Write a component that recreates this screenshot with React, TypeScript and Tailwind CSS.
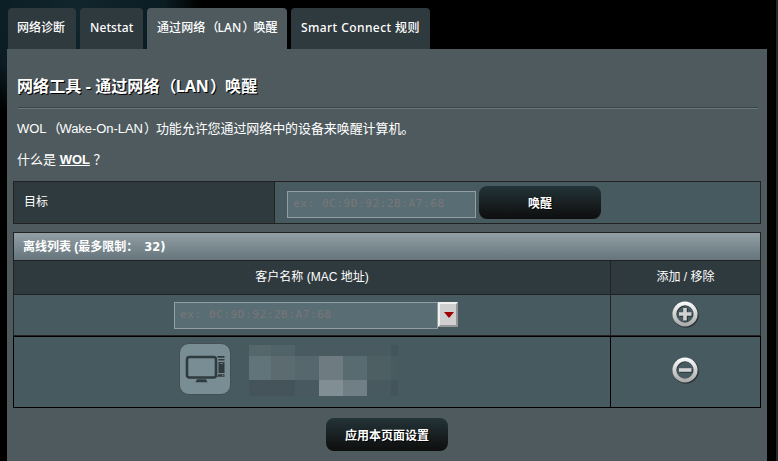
import React from "react";

const sans = "font-['Liberation_Sans','Noto_Sans_CJK_SC',sans-serif]";
const ui = "font-['Noto_Sans','Noto_Sans_CJK_SC',sans-serif]";

function Tab({ children, className }: { children: React.ReactNode; className: string }) {
  return (
    <div
      className={`h-[41px] shrink-0 rounded-t-[4px] pt-[11px] text-[12px] leading-[18px] font-medium whitespace-nowrap text-white ${ui} ${className}`}
    >
      {children}
    </div>
  );
}

// Full-width parentheses, set a little closer to the Latin text they enclose.
function Paren({ children }: { children: React.ReactNode }) {
  return (
    <>
      <span className="mr-[-1px] ml-[1px]">（</span>
      {children}
      <span className="mr-[-1px] ml-[1px]">）</span>
    </>
  );
}

function MacField({ className }: { className: string }) {
  return (
    <input
      placeholder="ex: 0C:9D:92:2B:A7:68"
      className={`h-[27px] shrink-0 border border-[#929ea1] bg-[#596d74] pb-[2px] pl-[5px] font-['DejaVu_Sans_Mono',monospace] text-[11px] tracking-[0.6px] text-white outline-none placeholder:text-[#7a7677] placeholder:opacity-100 ${className}`}
    />
  );
}

function Button({ children }: { children: React.ReactNode }) {
  return (
    <button
      className={`h-[33px] w-[122px] shrink-0 rounded-[8px] bg-linear-to-b from-[#233438] to-[#0e0e0e] pt-[2px] text-center text-[12px] leading-[18px] font-bold text-white [text-shadow:1px_1px_0_black] ${sans}`}
    >
      {children}
    </button>
  );
}

function RoundIcon({ minus = false }: { minus?: boolean }) {
  const id = minus ? "metal-minus" : "metal-plus";
  return (
    <svg width="30" height="30" viewBox="0 0 30 30" fill="none">
      <defs>
        <linearGradient id={id} x1="0" y1="2" x2="0" y2="27" gradientUnits="userSpaceOnUse">
          <stop stopColor="#ffffff" />
          <stop offset="1" stopColor="#a9a9a9" />
        </linearGradient>
      </defs>
      <circle cx="15.9" cy="15.9" r="10.8" stroke="#1f292c" strokeOpacity=".75" strokeWidth="4" />
      <circle cx="15" cy="15" r="10.6" stroke={`url(#${id})`} strokeWidth="3.9" />
      <path d={minus ? "M9.5 16h13" : "M9.5 16h13M16 9.5v13"} stroke="#263236" strokeWidth="3.5" />
      <path d={minus ? "M9 15h12.5" : "M9 15h12.5M15 9v12.5"} stroke="#d2d2d2" strokeWidth="3.6" />
    </svg>
  );
}

function Computer() {
  return (
    <div className="h-[52px] w-[52px] shrink-0 rounded-[10px] border border-[#444f53] bg-[#798e94]">
      <svg width="50" height="50" viewBox="0 0 50 50">
        <rect x="7" y="13" width="29" height="20.5" rx="2.5" fill="none" stroke="#2f3b3e" strokeWidth="2.6" />
        <path d="M17 35.2h9l1.5 3h-12z" fill="#2f3b3e" />
        <path d="M37 12h7.5v1.7H38zM38.5 15H44.5v1.5h-6zM38.5 18H44.5v11h-6zM38.5 30.2h6v2.6H37z" fill="#2f3b3e" />
        <path d="M40 19.5h3M42 31.5h1.5" stroke="#647579" />
      </svg>
    </div>
  );
}

const mosaic = [
  ["#56676b", "#506369", "#495b60", "#495b60", "#495b60", "#495b60", "#43545a"],
  ["#617479", "#5b6b6f", "#56686d", "#6e7b81", "#586b70", "#4d5f63", "#485b60"],
  ["#44545a", "#44545a", "#485a5f", "#818f95", "#6f7f85", "#485a5f", "#43545a"],
];

function Mosaic() {
  return (
    <div className="grid grid-cols-[22px_24px_24px_24px_24px_24px_7px] grid-rows-[11px_24px_16px]">
      {mosaic.flat().map((c, i) => (
        <div key={i} style={{ backgroundColor: c }} />
      ))}
    </div>
  );
}

export default function App() {
  return (
    <div className={`h-[461px] w-[778px] overflow-hidden border-r-2 border-[#20282c] bg-black bg-[radial-gradient(ellipse_125px_120px_at_75px_12px,#11262e_0%,#0b1c23_72%,#000_100%)] bg-no-repeat text-white ${sans}`}>
      <div className="flex gap-[4px] pt-[8px] pl-[8px]">
        <Tab className="w-[68px] bg-[#2f3a3e] pl-[9px]">网络诊断</Tab>
        <Tab className="w-[63px] bg-[#2f3a3e] pl-[10px] tracking-[0.1px]">Netstat</Tab>
        <Tab className="w-[140px] bg-[#4e5a5e] pl-[10px] tracking-[0.1px]">通过网络<Paren>LAN</Paren>唤醒</Tab>
        <Tab className="w-[139px] bg-[#2f3a3e] pl-[10px] tracking-[0.42px]">Smart Connect 规则</Tab>
      </div>

      <main className="ml-[7px] h-[412px] w-[760px] bg-[#4e5a5e] pl-[6px]">
        <h1 className={`ml-[4px] h-[58px] pt-[25px] text-[16px] leading-[24px] font-bold tracking-[0.1px] whitespace-nowrap [text-shadow:1px_1px_0_black] ${ui}`}>
          网络工具 - 通过网络<Paren>LAN</Paren>唤醒
        </h1>
        <div className="ml-[5px] h-[2px] w-[740px] border-t border-b border-t-[#38454a] border-b-[#69777c]" />
        <p className="ml-[4px] pt-[10px] text-[13px] leading-[20px] whitespace-nowrap">
          <span className="tracking-[-0.05px]">WOL<Paren>Wake-On-LAN</Paren></span>
          <span className="tracking-[-0.08px]">功能允许您通过网络中的设备来唤醒计算机。</span>
        </p>
        <p className="ml-[4px] mt-[11px] h-[31px] text-[13px] leading-[20px]">
          什么是 <span className="font-bold underline">WOL</span> ？
        </p>

        <div className="flex h-[43px] w-[748px] border border-[#222] bg-[#475a5f]">
          <div className="w-[261px] border-r border-[#222] bg-[#2f3a3e] pt-[11px] pl-[10px] text-[12px] leading-[18px]">目标</div>
          <div className="flex pt-[4px] pl-[12px]">
            <MacField className="mt-[5px] mr-[3px] w-[189px]" />
            <Button>唤醒</Button>
          </div>
        </div>

        <div className="mt-[8px] w-[748px] border-t border-[#222]">
          <div className="h-[28px] border-x border-b border-[#222] bg-linear-to-b from-[#92a0a5] to-[#66757c] pt-[5px] pl-[9px] text-[12px] leading-[18px] font-bold">
            离线列表 (最多限制：<span className="ml-[6px] font-['DejaVu_Sans',sans-serif] text-[11.5px]">32)</span>
          </div>
          <div className="grid h-[34px] grid-cols-[597px_149px] border-x border-b border-[#222] bg-[#2f3a3e] text-center text-[12px] leading-[18px]">
            <div className="border-r border-[#222] pt-[7px]">客户名称 (MAC 地址)</div>
            <div className="pt-[7px]">添加 / 移除</div>
          </div>
          <div className="grid h-[41px] grid-cols-[597px_149px] border-x border-b border-[#222] bg-[#475a5f]">
            <div className="flex border-r border-[#222] pt-[7px] pl-[160px]">
              <MacField className="w-[264px]" />
              <div className="flex h-[25px] w-[20px] items-center justify-center border-2 border-t-[#f1f1f1] border-r-[#969696] border-b-[#969696] border-l-[#f1f1f1] bg-[#cfcfcf] pl-[2px]">
                <svg width="10" height="6" viewBox="0 0 10 6"><path d="M0 0h10L5 6z" fill="#a00000" /></svg>
              </div>
            </div>
            <div className="flex pt-[4px] pl-[59px]"><RoundIcon /></div>
          </div>
          <div className="grid h-[72px] grid-cols-[597px_149px] border border-black bg-[#475a5f]">
            <div className="flex border-r border-black pt-[6px] pl-[165px]">
              <Computer />
              <div className="mt-[2px] ml-[18px]"><Mosaic /></div>
            </div>
            <div className="flex pt-[18px] pl-[59px]"><RoundIcon minus /></div>
          </div>
        </div>
        <div className="mt-[10px] flex w-[748px] justify-center"><Button>应用本页面设置</Button></div>
      </main>
    </div>
  );
}
